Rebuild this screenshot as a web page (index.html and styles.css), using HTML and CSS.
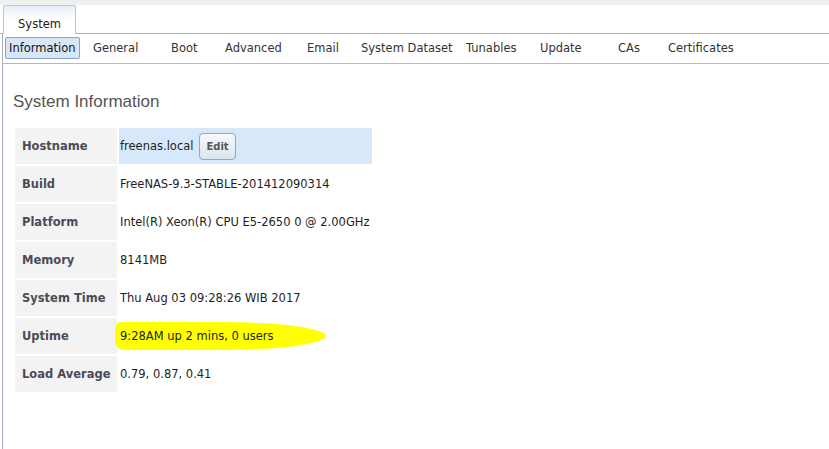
FILE: index.html
```html
<!doctype html>
<html>
<head>
    <meta name="viewport" content="width=device-width, initial-scale=1">
    <link rel="stylesheet" href="styles.css">
</head>
<body>

<div class='topstrip'></div>

<ul class='tabs'>
    <li class='tab'>System</li>
</ul>

<div class='pane'>
    <ul class='subtabs'>
        <li><a class='active'>Information</a></li>
        <li><a>General</a></li>
        <li><a>Boot</a></li>
        <li><a>Advanced</a></li>
        <li><a>Email</a></li>
        <li><a>System Dataset</a></li>
        <li><a>Tunables</a></li>
        <li><a>Update</a></li>
        <li><a>CAs</a></li>
        <li><a>Certificates</a></li>
    </ul>

    <div class='content'>
        <h2>System Information</h2>
        <table class='info'>
            <tr>
                <td class='label'>Hostname</td>
                <td class='value selected'>freenas.local<button class='edit'>Edit</button></td>
            </tr>
            <tr>
                <td class='label'>Build</td>
                <td class='value'>FreeNAS-9.3-STABLE-201412090314</td>
            </tr>
            <tr>
                <td class='label'>Platform</td>
                <td class='value'>Intel(R) Xeon(R) CPU E5-2650 0 @ 2.00GHz</td>
            </tr>
            <tr>
                <td class='label'>Memory</td>
                <td class='value'>8141MB</td>
            </tr>
            <tr>
                <td class='label'>System Time</td>
                <td class='value'>Thu Aug 03 09:28:26 WIB 2017</td>
            </tr>
            <tr>
                <td class='label'>Uptime</td>
                <td class='value'><span class='marked'>9:28AM up 2 mins, 0 users</span></td>
            </tr>
            <tr>
                <td class='label'>Load Average</td>
                <td class='value'>0.79, 0.87, 0.41</td>
            </tr>
        </table>
    </div>
</div>

</body>
</html>
```

FILE: styles.css
```css
body {
    margin: 0;
    font-family: "DejaVu Sans", Verdana, sans-serif;
    font-size: 11.5px;
    color: #1e1e1e;
    background: #fff;
}

.topstrip {
    height: 5px;
    background: #f0f0f0;
}

.tabs {
    display: flex;
    margin: 0;
    padding: 0 0 0 3px;
    list-style: none;
    height: 28px;
    border-bottom: 1px solid #a9aec0;
}

.tab {
    width: 71px;
    height: 17px;
    padding-top: 11px;
    margin-bottom: -1px;
    border: 1px solid #bcc6d6;
    border-bottom: none;
    border-radius: 2px 2px 0 0;
    background: linear-gradient(#e4edf9, #fff 45%);
    text-align: center;
    line-height: 14px;
    color: #222;
}

.pane {
    margin-left: 2px;
    border-left: 1px solid #a9aec0;
    min-height: calc(100vh - 34px);
}

.subtabs {
    display: grid;
    grid-template-columns: 84px 78px 54px 82px 54px 105px 74px 78px 50px auto;
    align-items: center;
    height: 29px;
    margin: 0;
    padding: 0 0 0 2px;
    list-style: none;
    border-bottom: 1px solid #b5b9c6;
}

.subtabs a {
    display: inline-block;
    padding: 4px 3px 3px;
    line-height: 13px;
    border: 1px solid transparent;
    border-radius: 2px;
    color: #333;
    margin-top: -2px;
}

.subtabs a.active {
    background: #d7e7f8;
    border-color: #86a5cc;
    color: #111;
}

.content {
    padding-left: 10px;
}

h2 {
    margin: 28px 0 14px;
    font-family: "Liberation Sans", Arial, sans-serif;
    font-size: 17px;
    line-height: 20px;
    font-weight: normal;
    color: #555;
}

.info {
    border-spacing: 2px;
}

.info td {
    height: 36px;
    padding: 0;
}

.label {
    width: 95px;
    padding-left: 7px !important;
    background: #f3f3f3;
    font-weight: bold;
    color: #4b4b58;
}

.value {
    width: 252px;
    padding-left: 1px !important;
    white-space: nowrap;
}

.selected {
    background: #d6e8fa;
}

.edit {
    margin-left: 6px;
    height: 27px;
    padding: 0 6px;
    vertical-align: middle;
    font-family: "DejaVu Sans", Verdana, sans-serif;
    font-size: 10px;
    font-weight: bold;
    color: #555;
    border: 1px solid #97a6bb;
    border-radius: 4px;
    background: linear-gradient(#f7f9fc, #dce4ee);
}

.marked {
    position: relative;
    z-index: 0;
}

.marked::before {
    content: '';
    position: absolute;
    left: -5px;
    right: -52px;
    top: -7px;
    bottom: -7px;
    z-index: -1;
    background: #ffff00;
    border-radius: 6px 50% 50% 8px / 8px 50% 50% 10px;
}
```
